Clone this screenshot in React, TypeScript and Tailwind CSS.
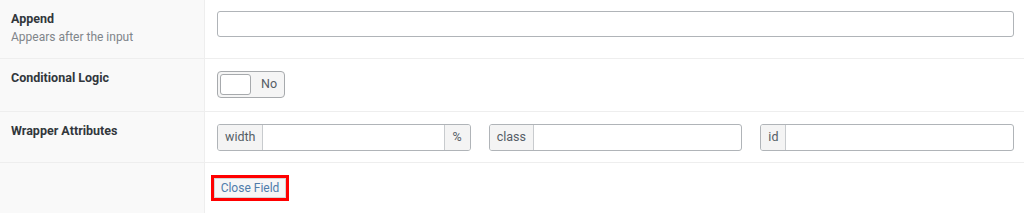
const font = { fontFamily: 'Roboto, "Open Sans", sans-serif' };

function Label({ title, desc }: { title: string; desc?: string }) {
  return (
    <div className="w-[205px] shrink-0 bg-[#f9f9f9] border-r border-[#eeeeee] px-[11px] pt-[10px]">
      <div className="text-[12.5px] font-bold leading-[18px] text-[#32373c]">{title}</div>
      {desc && <div className="text-[12px] leading-[18px] text-[#80858a]">{desc}</div>}
    </div>
  );
}

function Prefixed({ prefix, suffix, grow }: { prefix: string; suffix?: string; grow?: boolean }) {
  return (
    <div className={`flex h-[27px] rounded-[3px] border border-[#b0b4b8] bg-white overflow-hidden ${grow ? 'flex-1' : ''}`}>
      <div className="flex items-center px-[7px] bg-[#f4f4f4] border-r border-[#c8cbce] text-[12.5px] text-[#555d66]">{prefix}</div>
      <div className="flex-1" />
      {suffix && (
        <div className="flex items-center w-[26px] justify-center bg-[#f4f4f4] border-l border-[#c8cbce] text-[12.5px] text-[#555d66]">{suffix}</div>
      )}
    </div>
  );
}

export default function App() {
  return (
    <div className="w-[1024px] h-[213px] bg-white overflow-hidden" style={font}>
      {/* Append */}
      <div className="flex h-[59px] border-b border-[#eeeeee]">
        <Label title="Append" desc="Appears after the input" />
        <div className="flex-1 pl-[12px] pr-[10px] pt-[11px]">
          <div className="h-[26px] rounded-[3px] border border-[#b0b4b8] bg-white" />
        </div>
      </div>

      {/* Conditional Logic */}
      <div className="flex h-[53px] border-b border-[#eeeeee]">
        <Label title="Conditional Logic" />
        <div className="flex-1 pl-[12px] pt-[12px]">
          <div className="flex items-center w-[68px] h-[27px] rounded-[4px] border border-[#a7aaad] bg-[#f5f5f5] p-[2px] gap-[10px]">
            <div className="w-[31px] h-[21px] rounded-[3px] border border-[#a7aaad] bg-white" />
            <span className="text-[12.5px] text-[#555d66]">No</span>
          </div>
        </div>
      </div>

      {/* Wrapper Attributes */}
      <div className="flex h-[51px] border-b border-[#eeeeee]">
        <Label title="Wrapper Attributes" />
        <div className="flex-1 flex gap-[18px] pl-[12px] pr-[10px] pt-[12px]">
          <Prefixed prefix="width" suffix="%" grow />
          <Prefixed prefix="class" grow />
          <Prefixed prefix="id" grow />
        </div>
      </div>

      {/* Close */}
      <div className="flex h-[50px]">
        <div className="w-[205px] shrink-0 bg-[#f9f9f9] border-r border-[#eeeeee]" />
        <div className="flex-1 pl-[6px] pt-[12px]">
          <div className="flex w-[78px] h-[26px] border-[3px] border-[#ff0000]">
            <button className="flex-1 bg-[#f6f6f6] border border-[#d4d4d4] text-[12px] leading-[18px] text-[#4f7cab]">Close Field</button>
          </div>
        </div>
      </div>
    </div>
  );
}
